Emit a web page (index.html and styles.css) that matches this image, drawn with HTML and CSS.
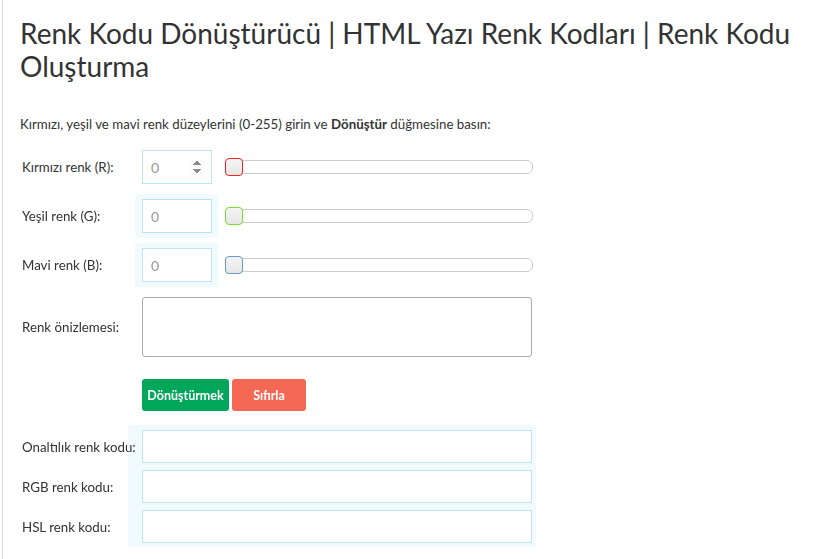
FILE: index.html
```html
<!DOCTYPE html>
<html lang="tr">
<head>
    <meta charset="UTF-8">
    <meta name="viewport" content="width=device-width, initial-scale=1.0">
    <title>Renk Kodu Dönüştürücü</title>
    <link rel="stylesheet" href="styles.css">
</head>
<body>
    <div class="page">
        <h1>Renk Kodu Dönüştürücü | HTML Yazı Renk Kodları | Renk Kodu Oluşturma</h1>
        <p class="intro">Kırmızı, yeşil ve mavi renk düzeylerini (0-255) girin ve <b>Dönüştür</b> düğmesine basın:</p>

        <div class="row">
            <label class="lbl" for="red">Kırmızı renk (R):</label>
            <div class="cell">
                <input type="number" id="red" class="num" value="0" min="0" max="255" autofocus>
            </div>
            <input type="range" id="redSlider" class="slider red" min="0" max="255" value="0">
        </div>
        <div class="row">
            <label class="lbl" for="green">Yeşil renk (G):</label>
            <div class="cell tint">
                <input type="number" id="green" class="num" value="0" min="0" max="255">
            </div>
            <input type="range" id="greenSlider" class="slider green" min="0" max="255" value="0">
        </div>
        <div class="row">
            <label class="lbl" for="blue">Mavi renk (B):</label>
            <div class="cell tint">
                <input type="number" id="blue" class="num" value="0" min="0" max="255">
            </div>
            <input type="range" id="blueSlider" class="slider blue" min="0" max="255" value="0">
        </div>

        <div class="row preview-row">
            <span class="lbl">Renk önizlemesi:</span>
            <div class="preview"></div>
        </div>

        <div class="buttons">
            <button class="btn convert">Dönüştürmek</button>
            <button class="btn reset">Sıfırla</button>
        </div>

        <div class="codes">
            <div class="code-row">
                <label class="lbl" for="hex">Onaltılık renk kodu:</label>
                <input type="text" id="hex" class="code">
            </div>
            <div class="code-row">
                <label class="lbl" for="rgb">RGB renk kodu:</label>
                <input type="text" id="rgb" class="code">
            </div>
            <div class="code-row">
                <label class="lbl" for="hsl">HSL renk kodu:</label>
                <input type="text" id="hsl" class="code">
            </div>
        </div>
    </div>
</body>
</html>
```

FILE: styles.css
```css
body {
    margin: 0;
    font-family: "Lato", "Open Sans", sans-serif;
    color: #333;
    background: #fff;
}
.page {
    margin-left: 2px;
    border-left: 1px solid #ddd;
    padding: 17px 0 20px 17px;
    min-height: 540px;
}
h1 {
    font-size: 28px;
    font-weight: 400;
    line-height: 33px;
    margin: 0;
    width: 790px;
}
.intro {
    font-size: 13.3px;
    margin: 33px 0 13px 0;
}
.row {
    display: flex;
    align-items: center;
    height: 44px;
    margin-bottom: 5px;
}
.lbl {
    width: 122px;
    flex: none;
    font-size: 13.3px;
    padding-left: 2px;
    box-sizing: border-box;
    white-space: nowrap;
}
.cell {
    width: 83px;
    height: 44px;
    margin-left: -7px;
    padding: 5px 6px 5px 7px;
    box-sizing: border-box;
}
.cell.tint {
    background: #f0faff;
}
.num {
    width: 70px;
    height: 34px;
    box-sizing: border-box;
    border: 1px solid #bfe3ef;
    padding: 0 6px 0 8px;
    font-family: inherit;
    font-size: 14px;
    color: #999;
    outline: none;
}
.slider {
    -webkit-appearance: none;
    appearance: none;
    width: 306px;
    height: 12px;
    margin: 0 0 0 7px;
    border: 1px solid #ccc;
    border-radius: 6px;
    background: #fff;
    outline: none;
}
.slider::-webkit-slider-thumb {
    -webkit-appearance: none;
    appearance: none;
    width: 18px;
    height: 18px;
    border-radius: 4px;
    background: linear-gradient(#f4f4f4, #e6e6e6);
    border: 1px solid #aaa;
    box-sizing: border-box;
    margin-left: -1px;
}
.slider.red::-webkit-slider-thumb {
    border-color: #e22;
}
.slider.green::-webkit-slider-thumb {
    border-color: #7d3;
}
.slider.blue::-webkit-slider-thumb {
    border-color: #69c;
}
.preview-row {
    height: 60px;
    margin-top: 10px;
}
.preview {
    width: 390px;
    height: 60px;
    box-sizing: border-box;
    border: 1px solid #aaa;
    border-radius: 3px;
}
.buttons {
    display: flex;
    gap: 3px;
    margin: 22px 0 0 122px;
}
.btn {
    height: 32px;
    border: none;
    border-radius: 3px;
    color: #fff;
    font-family: inherit;
    font-size: 12.5px;
    font-weight: 700;
    padding: 0;
}
.convert {
    width: 87px;
    background: #00a65a;
}
.reset {
    width: 74px;
    background: #f56954;
}
.codes {
    position: relative;
    z-index: 0;
    width: 517px;
    margin-top: 14px;
    padding-top: 5px;
}
.codes::before {
    content: "";
    position: absolute;
    left: 108px;
    top: 0;
    width: 408px;
    height: 122px;
    background: #f0faff;
    z-index: -1;
}
.code-row {
    display: flex;
    align-items: center;
    margin-bottom: 7px;
}
.code {
    width: 390px;
    height: 33px;
    box-sizing: border-box;
    border: 1px solid #bfe3ef;
    outline: none;
}
```
